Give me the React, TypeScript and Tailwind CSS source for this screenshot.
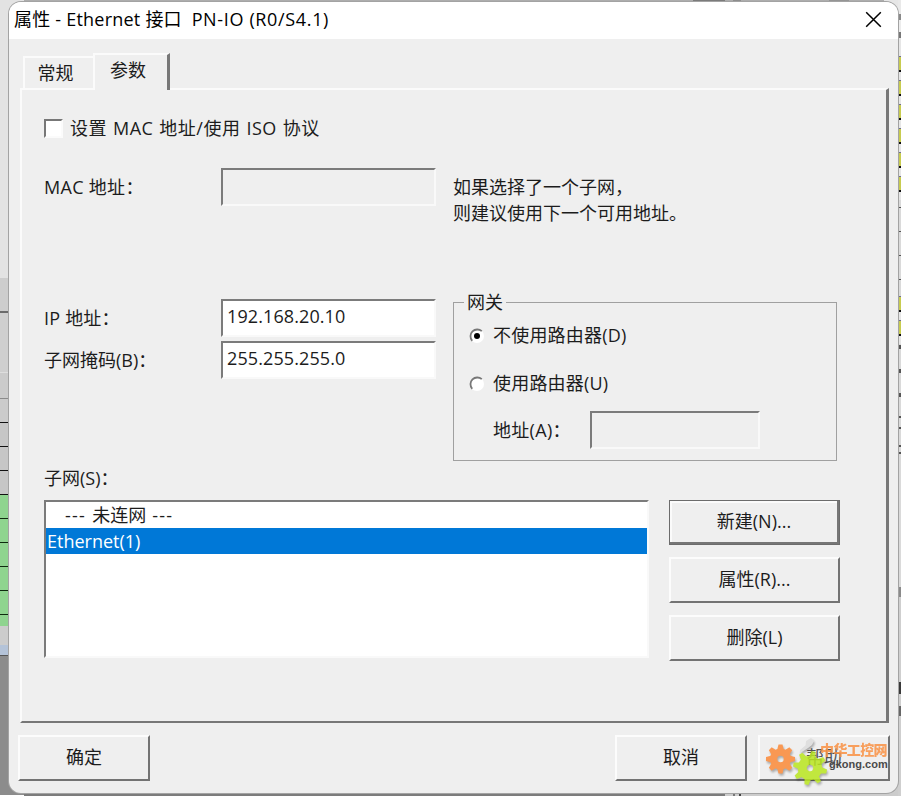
import React, { useState } from 'react';
import clsx from 'clsx';

interface Band {
  h: number;
  tone: string;
}

// Slices of the window behind the dialog, top to bottom
const leftBands: Band[] = [
  { h: 278, tone: 'bg-[#e3e3e3]' },
  { h: 33, tone: 'bg-[#cdcdcd]' },
  { h: 2, tone: 'bg-[#6b6b6b]' },
  { h: 59, tone: 'bg-[#cfcfcf]' },
  { h: 1, tone: 'bg-[#dedede]' },
  { h: 25, tone: 'bg-[#cbcbcb]' },
  { h: 1, tone: 'bg-[#8b8b8b]' },
  { h: 23, tone: 'bg-[#cbcbcb]' },
  { h: 1, tone: 'bg-[#111111]' },
  { h: 23, tone: 'bg-[#c6c6c6]' },
  { h: 1, tone: 'bg-[#111111]' },
  { h: 23, tone: 'bg-[#c6c6c6]' },
  { h: 1, tone: 'bg-[#111111]' },
  { h: 23, tone: 'bg-[#c6c6c6]' },
  { h: 1, tone: 'bg-[#111111]' },
  { h: 23, tone: 'bg-[#8fd48f]' },
  { h: 1, tone: 'bg-[#0f2a0f]' },
  { h: 23, tone: 'bg-[#8fd48f]' },
  { h: 1, tone: 'bg-[#0f2a0f]' },
  { h: 23, tone: 'bg-[#8fd48f]' },
  { h: 1, tone: 'bg-[#0f2a0f]' },
  { h: 23, tone: 'bg-[#8fd48f]' },
  { h: 1, tone: 'bg-[#0f2a0f]' },
  { h: 23, tone: 'bg-[#8fd48f]' },
  { h: 1, tone: 'bg-[#0f2a0f]' },
  { h: 11, tone: 'bg-[#8fd48f]' },
  { h: 19, tone: 'bg-[#cccccc]' },
  { h: 10, tone: 'bg-[#b4c3d8]' },
  { h: 1, tone: 'bg-[#555555]' },
  { h: 139, tone: 'bg-[#8c8c8c]' },
];

const tag: Band[] = [
  { h: 1, tone: 'bg-[#6f6f8f]' },
  { h: 13, tone: 'bg-[#c8cc50]' },
  { h: 2, tone: 'bg-[#111111]' },
  { h: 8, tone: 'bg-[#e6e6e6]' },
];

const dash: Band[] = [
  { h: 1, tone: 'bg-[#555555]' },
  { h: 23, tone: 'bg-[#dadada]' },
];

const rightBands: Band[] = [
  { h: 14, tone: 'bg-[#e9e9e9]' },
  { h: 6, tone: 'bg-[#8a8a8a]' },
  { h: 12, tone: 'bg-[#ececec]' },
  { h: 6, tone: 'bg-[#777777]' },
  { h: 18, tone: 'bg-[#e6e6e6]' },
  ...tag, ...tag, ...tag, ...tag, ...tag, ...tag,
  { h: 7, tone: 'bg-[#dadada]' },
  ...dash, ...dash, ...dash,
  { h: 1, tone: 'bg-[#555555]' },
  { h: 16, tone: 'bg-[#dadada]' },
  ...tag, ...tag,
  { h: 1, tone: 'bg-[#dadada]' },
  { h: 4, tone: 'bg-[#555555]' },
  { h: 20, tone: 'bg-[#dadada]' },
  { h: 4, tone: 'bg-[#555555]' },
  { h: 20, tone: 'bg-[#dadada]' },
  { h: 4, tone: 'bg-[#555555]' },
  { h: 19, tone: 'bg-[#dadada]' },
  { h: 2, tone: 'bg-[#555555]' },
  { h: 9, tone: 'bg-[#dadada]' },
  { h: 2, tone: 'bg-[#555555]' },
  { h: 16, tone: 'bg-[#dadada]' },
  { h: 2, tone: 'bg-[#555555]' },
  { h: 5, tone: 'bg-[#dadada]' },
  { h: 2, tone: 'bg-[#555555]' },
  { h: 133, tone: 'bg-[#dadada]' },
  { h: 10, tone: 'bg-[#8a8a8a]' },
  { h: 85, tone: 'bg-[#cfcfcf]' },
  { h: 12, tone: 'bg-[#3a3a3a]' },
  { h: 12, tone: 'bg-[#cfcfcf]' },
  { h: 10, tone: 'bg-[#666666]' },
  { h: 90, tone: 'bg-[#cfcfcf]' },
];

const Strip: React.FC<{ bands: Band[]; className: string }> = ({ bands, className }) => (
  <div className={clsx('flex h-full flex-col overflow-hidden', className)}>
    {bands.map((band, i) => (
      <div key={i} className={clsx('shrink-0', band.tone)} style={{ height: band.h }}></div>
    ))}
  </div>
);

const Backdrop = () => (
  <div className="absolute inset-0 flex">
    <Strip bands={leftBands} className="w-[24px]" />
    <div className="flex flex-1 flex-col justify-between">
      <div className="flex h-[3px] bg-[#adadad] pl-[669px]">
        <div className="w-[32px] bg-[#7b7b7b]"></div>
        <div className="ml-[8px] w-[8px] bg-[#8d8d8d]"></div>
        <div className="ml-[88px] w-[20px] bg-[#959595]"></div>
      </div>
      <div className="flex h-[24px] bg-[#cccccc]">
        <div className="w-[701px] bg-[#7c7c7c]"></div>
        <div className="ml-[8px] w-[2px] bg-[#777777]"></div>
        <div className="ml-[4px] w-[2px] bg-[#444444]"></div>
      </div>
    </div>
    <div className="flex w-[14px] flex-col bg-[#cccccc]">
      <div className="h-[28px] bg-[#e6e6e6]"></div>
    </div>
    <Strip bands={rightBands} className="w-[3px]" />
  </div>
);

const TextBox: React.FC<{ value?: string; disabled?: boolean; className?: string }> = ({
  value = '',
  disabled,
  className,
}) => (
  <input
    defaultValue={value}
    disabled={disabled}
    className={clsx(
      'block h-[38px] rounded-none border-2 border-t-[#7b7b7b] border-l-[#7b7b7b] border-r-[#f9f9f9] border-b-[#f9f9f9] pb-[4px] pl-[4px] leading-[20px] tracking-[0.1px] outline-none',
      disabled ? 'bg-[#efefef]' : 'bg-white',
      className,
    )}
  />
);

interface PushButtonProps {
  children: React.ReactNode;
  isDefault?: boolean;
  className?: string;
}

const PushButton: React.FC<PushButtonProps> = ({ children, isDefault, className }) => (
  <button
    className={clsx(
      'flex shrink-0 items-center justify-center bg-[#efefef] leading-[20px]',
      isDefault
        ? 'border border-[#6c6c6c] pr-[1px] pb-[3px] shadow-[inset_-2px_-2px_0_#767676,inset_2px_2px_0_#fbfbfb]'
        : 'border-2 border-t-[#fcfcfc] border-l-[#fcfcfc] border-r-[#737373] border-b-[#737373] pb-[2px]',
      className,
    )}
  >
    {children}
  </button>
);

const Radio: React.FC<{ label: string; checked: boolean; onSelect: () => void }> = ({
  label,
  checked,
  onSelect,
}) => (
  <button onClick={onSelect} className="flex h-[20px] items-center gap-[8px] leading-[20px]">
    <svg width="16" height="16" viewBox="0 0 16 16" className="mt-[1px]">
      <circle cx="8" cy="8" r="7" fill="#ffffff" />
      <path d="M3.2 12.8A6.8 6.8 0 0 1 12.8 3.2" fill="none" stroke="#777777" strokeWidth="1.8" />
      {checked && <circle cx="8" cy="8" r="3" fill="#000000" />}
    </svg>
    {label}
  </button>
);

const teeth = [0, 45, 90, 135, 180, 225, 270, 315];

const Gear: React.FC<{ cx: number; cy: number; r: number; fill: string; turn?: number }> = ({
  cx,
  cy,
  r,
  fill,
  turn = 0,
}) => (
  <g transform={`translate(${cx} ${cy}) rotate(${turn})`} fill={fill}>
    {teeth.map((angle) => (
      <path key={angle} d={`M-3.4 ${-r * 0.6}L-2 ${-r}H2L3.4 ${-r * 0.6}Z`} transform={`rotate(${angle})`} />
    ))}
    <path
      fillRule="evenodd"
      d={`M${-r * 0.72} 0a${r * 0.72} ${r * 0.72} 0 1 0 ${r * 1.44} 0a${r * 0.72} ${r * 0.72} 0 1 0 ${-r * 1.44} 0ZM-3.2 0a3.2 3.2 0 1 1 6.4 0a3.2 3.2 0 1 1 -6.4 0Z`}
    />
  </g>
);

const Watermark = () => (
  <div className="pointer-events-none absolute -top-[3px] left-[4px] h-[56px] w-[130px]">
    <svg
      width="130"
      height="56"
      viewBox="0 0 130 56"
      className="absolute inset-0 opacity-85 drop-shadow-[1px_2px_1px_rgba(0,0,0,0.35)]"
    >
      <path d="M38 18L44 13V9L49 6L52 9L50 13L46 16L38 21Z" fill="#dddddd" />
      <Gear cx={18.5} cy={27} r={14.5} fill="#fb8a38" />
      <Gear cx={48} cy={36} r={17} fill="#b9e61f" turn={12} />
    </svg>
    <div className="absolute top-[10px] left-[58px] text-[14px] leading-[16px] font-black tracking-[-0.6px] whitespace-nowrap text-[#fa9244] opacity-85">
      中华工控网
    </div>
    <div className="absolute top-[26px] left-[67px] font-['Liberation_Sans'] text-[11px] leading-[12px] font-bold text-[#4a4a4a]">
      gkong.com
    </div>
  </div>
);

const subnets = [
  <>
    <span className="tracking-[1.3px] whitespace-pre">{'   --- '}</span>未连网
    <span className="tracking-[1.3px] whitespace-pre">{'\u00a0---'}</span>
  </>,
  'Ethernet(1)',
];

export default function App() {
  const [router, setRouter] = useState(false);
  const [selected, setSelected] = useState(1);

  return (
    <div className="relative h-[796px] w-[901px] overflow-hidden font-['Open_Sans','Noto_Sans_CJK_SC',sans-serif] text-[18px] text-[#1c1c1c]">
      <Backdrop />

      <div className="relative mt-[2px] ml-[9px] flex h-[791px] w-[889px] flex-col overflow-hidden rounded-xl bg-[#efefef] shadow-[0_0_0_1px_#a3a3a3]">
        {/* Title bar */}
        <div className="flex h-[37px] shrink-0 items-center justify-between bg-white pr-[16px] pb-[2px] pl-[5px] text-black">
          <span className="pb-[2px] text-[18px] leading-[20px] tracking-[0.22px] whitespace-pre">
            属性 - Ethernet 接口  <span className="tracking-[0.65px]">PN-IO (R0/S4.1)</span>
          </span>
          <svg width="17" height="17" viewBox="0 0 17 17" stroke="#000000" strokeWidth="1.5">
            <path d="M1.2 1.2L15.8 15.8M15.8 1.2L1.2 15.8" />
          </svg>
        </div>

        {/* Tabs */}
        <div className="mt-[14px] flex h-[35px] shrink-0 items-end pl-[14px] leading-[20px]">
          <button className="h-[32px] w-[70px] border-t-2 border-l-2 border-[#fbfbfb] pr-[7px]">常规</button>
          <button className="z-10 -mb-[2px] h-[37px] w-[77px] border-t-2 border-r-[3px] border-l-2 border-t-[#fbfbfb] border-r-[#777777] border-l-[#fbfbfb] bg-[#efefef] pr-[6px] pb-[5px]">
            参数
          </button>
        </div>

        {/* Tab page */}
        <div className="ml-[11px] flex h-[635px] w-[869px] shrink-0 flex-col border-t-2 border-r-[3px] border-b-2 border-l-2 border-t-[#fbfbfb] border-r-[#777777] border-b-[#777777] border-l-[#fbfbfb] pl-[22px]">
          <label className="mt-[28px] flex h-[20px] items-center gap-[7px] leading-[20px] tracking-[0.5px] [word-spacing:0.8px]">
            <span className="h-[19px] w-[19px] border-2 border-t-[#777777] border-l-[#777777] border-r-[#fbfbfb] border-b-[#fbfbfb] bg-white"></span>
            设置 MAC 地址/使用 ISO 协议
          </label>

          <div className="mt-[30px] flex">
            <div className="flex w-[409px] shrink-0 flex-col">
              <div className="flex items-center">
                <span className="w-[177px] tracking-[0.3px]">MAC 地址：</span>
                <TextBox disabled className="w-[215px]" />
              </div>
              <div className="mt-[93px] flex items-center">
                <span className="w-[177px] tracking-[0.2px]">IP 地址：</span>
                <TextBox value="192.168.20.10" className="w-[215px]" />
              </div>
              <div className="mt-[4px] flex items-center">
                <span className="w-[177px]">子网掩码(B)：</span>
                <TextBox value="255.255.255.0" className="w-[215px]" />
              </div>
            </div>

            <div className="flex flex-col">
              <p className="mt-[6px] leading-[26px]">
                如果选择了一个子网，
                <br />
                则建议使用下一个可用地址。
              </p>
              <fieldset className="mt-[67px] h-[168px] w-[384px] border border-[#a0a0a0] pl-[15px]">
                <legend className="-ml-[5px] h-[18px] px-[3px] leading-[18px]">网关</legend>
                <div className="mt-[14px] flex flex-col gap-[28px] tracking-[0.2px]">
                  <Radio label="不使用路由器(D)" checked={!router} onSelect={() => setRouter(false)} />
                  <Radio label="使用路由器(U)" checked={router} onSelect={() => setRouter(true)} />
                </div>
                <div className="mt-[18px] flex items-center pl-[24px]">
                  <span className="w-[97px] tracking-[0.3px]">地址(A)：</span>
                  <TextBox disabled className="w-[170px]" />
                </div>
              </fieldset>
            </div>
          </div>

          <div className="mt-[7px] h-[20px] leading-[20px]">子网(S)：</div>
          <div className="mt-[12px] flex gap-[20px]">
            <ul className="h-[158px] w-[605px] border-2 border-t-[#7b7b7b] border-l-[#7b7b7b] border-r-[#f9f9f9] border-b-[#f9f9f9] bg-white">
              {subnets.map((name, i) => (
                <li
                  key={i}
                  onClick={() => setSelected(i)}
                  className={clsx('h-[26px] pl-[1px] leading-[26px]', i === selected && 'bg-[#0078d7] text-white')}
                >
                  {name}
                </li>
              ))}
            </ul>
            <div className="flex flex-col gap-[12px]">
              <PushButton isDefault className="h-[45px] w-[171px]">新建(N)...</PushButton>
              <PushButton className="h-[46px] w-[171px]">属性(R)...</PushButton>
              <PushButton className="h-[46px] w-[171px]">删除(L)</PushButton>
            </div>
          </div>
        </div>

        {/* Dialog buttons */}
        <div className="mt-[12px] flex pl-[9px]">
          <PushButton className="h-[46px] w-[132px]">确定</PushButton>
          <PushButton className="ml-[465px] h-[46px] w-[132px]">取消</PushButton>
          <div className="relative ml-[11px]">
            <PushButton className="h-[46px] w-[132px] text-[#555555]">帮助</PushButton>
            <Watermark />
          </div>
        </div>
      </div>
    </div>
  );
}
